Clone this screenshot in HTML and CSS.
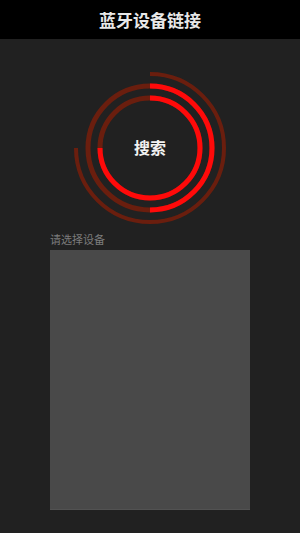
FILE: index.html
```html
<!DOCTYPE html>
<html lang="zh-CN">
	<head>
		<meta charset="UTF-8">
		<title>蓝牙设备链接</title>
		<meta name="viewport" content="width=device-width, initial-scale=1">
		<link rel="stylesheet" href="styles.css">
	</head>
	<body>
		<header class="title-bar">蓝牙设备链接</header>
		<main class="container">
			<div class="scan">
				<svg class="rings" xmlns="http://www.w3.org/2000/svg" viewBox="0 0 160 160" width="160" height="160" fill="none">
					<path class="ring-dim" stroke-width="4" d="M80 6 A74 74 0 1 1 6 80" />
					<circle class="ring-dim" stroke-width="5" cx="80" cy="80" r="62" />
					<path class="ring-lit" stroke-width="5" d="M80 18 A62 62 0 0 1 80 142" />
					<circle class="ring-dim" stroke-width="5" cx="80" cy="80" r="50" />
					<path class="ring-lit" stroke-width="5" d="M80 30 A50 50 0 1 1 30 80" />
				</svg>
				<span class="scan-label">搜索</span>
			</div>
			<section class="devices">
				<div class="devices-title">请选择设备</div>
				<div id="device-list" class="device-list"></div>
			</section>
		</main>
	</body>
</html>
```
FILE: styles.css
```css
html, body {
	margin: 0;
	padding: 0;
	height: 100%;
	font-family: "Noto Sans CJK SC", "Noto Sans", sans-serif;
	background-color: #212121;
}

.title-bar {
	height: 39px;
	background-color: #000;
	color: #e8e8e8;
	font-size: 17px;
	font-weight: bold;
	display: flex;
	align-items: center;
	justify-content: center;
}

.container {
	display: flex;
	flex-direction: column;
	align-items: center;
}

.scan {
	margin-top: 29px;
	display: grid;
	place-items: center;
}

.scan > * {
	grid-area: 1 / 1;
}

.rings {
	display: block;
}

.ring-dim {
	stroke: #6a1e0e;
}

.ring-lit {
	stroke: #ff0a0a;
}

.scan-label {
	color: #f2f2f2;
	font-size: 16px;
	font-weight: bold;
	margin-top: -2px;
}

.devices {
	width: 200px;
	margin-top: 3px;
}

.devices-title {
	color: #7c7c7c;
	font-size: 11px;
	line-height: 16px;
	margin-bottom: 3px;
}

.device-list {
	height: 259px;
	background-color: #494949;
	border-bottom: 1px solid #525252;
}
```
